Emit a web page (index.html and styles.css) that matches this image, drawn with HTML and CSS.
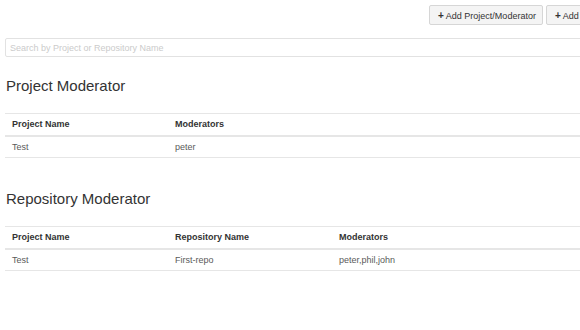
FILE: index.html
```html
<!DOCTYPE html>
<html>
<head>
<meta charset="utf-8">
<link rel="stylesheet" href="styles.css">
</head>
<body>
<div class="page">
  <div class="toolbar">
    <button class="btn"><span class="plus">+</span> Add Project/Moderator</button>
    <button class="btn"><span class="plus">+</span> Add Repository/Moderator</button>
  </div>
  <input class="search" type="text" placeholder="Search by Project or Repository Name">
  <h2 class="title">Project Moderator</h2>
  <table class="grid">
    <colgroup><col class="c1"><col></colgroup>
    <thead><tr><th>Project Name</th><th>Moderators</th></tr></thead>
    <tbody><tr><td>Test</td><td>peter</td></tr></tbody>
  </table>
  <h2 class="title title2">Repository Moderator</h2>
  <table class="grid">
    <colgroup><col class="c1"><col class="c2"><col></colgroup>
    <thead><tr><th>Project Name</th><th>Repository Name</th><th>Moderators</th></tr></thead>
    <tbody><tr><td>Test</td><td>First-repo</td><td>peter,phil,john</td></tr></tbody>
  </table>
</div>
</body>
</html>
```
FILE: styles.css
```css
html, body {
  margin: 0;
  padding: 0;
  background: #fff;
  overflow: hidden;
}
body {
  width: 580px;
  height: 330px;
  font-family: "Liberation Sans", Arial, sans-serif;
  color: #333;
}
.page {
  width: 700px;
  padding: 5px 0 0 5px;
  box-sizing: border-box;
}
.toolbar {
  display: flex;
  gap: 3px;
  padding-left: 424px;
}
.btn {
  height: 20px;
  padding: 0 6px 0 8px;
  font-family: "Liberation Sans", Arial, sans-serif;
  font-size: 9px;
  color: #333;
  background: #f4f4f4;
  border: 1px solid #d6d6d6;
  border-radius: 2px;
  white-space: nowrap;
}
.plus {
  font-weight: bold;
  font-size: 10px;
}
.search {
  display: block;
  margin-top: 13px;
  width: 680px;
  height: 19px;
  box-sizing: border-box;
  border: 1px solid #e2e2e2;
  border-radius: 2px;
  padding: 0 4px;
  font-family: "Liberation Sans", Arial, sans-serif;
  font-size: 9px;
  outline: none;
}
.search::placeholder {
  color: #cbcbcb;
}
.title {
  margin: 20px 0 0 1px;
  font-size: 15px;
  font-weight: normal;
  line-height: 17px;
  color: #333;
}
.title2 {
  margin-top: 32px;
}
.grid {
  margin-top: 19px;
  width: 680px;
  border-collapse: collapse;
  table-layout: fixed;
  font-size: 9px;
}
.c1 { width: 163px; }
.c2 { width: 164px; }
.grid th, .grid td {
  text-align: left;
  height: 22px;
  padding: 0 7px;
  box-sizing: border-box;
}
.grid th {
  font-weight: bold;
  color: #333;
  border-top: 1px solid #e6e6e6;
  border-bottom: 2px solid #e6e6e6;
}
.grid td {
  color: #5a5a5a;
  border-bottom: 1px solid #e6e6e6;
}
```
